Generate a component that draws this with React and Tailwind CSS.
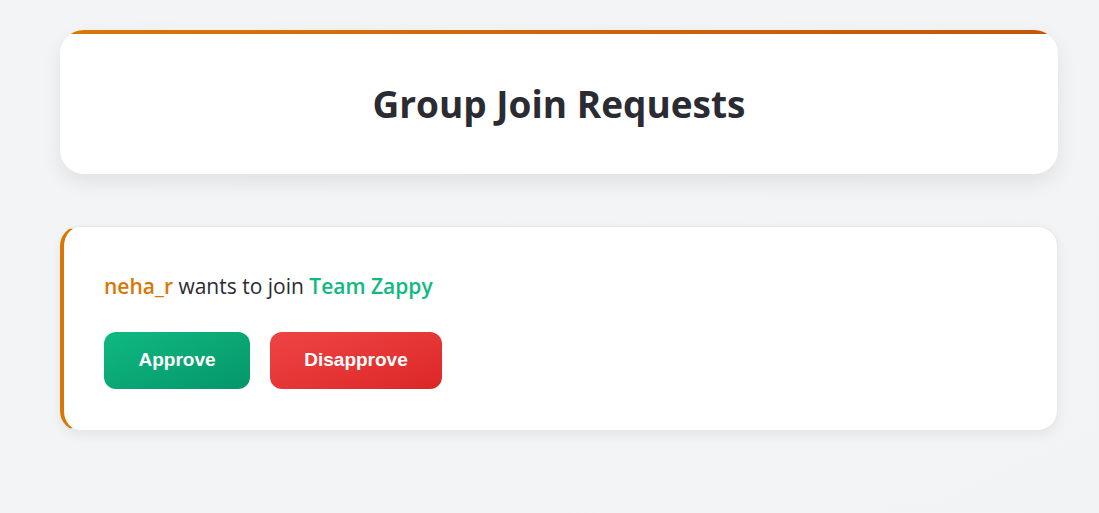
export default function App() {
  return (
    <div className="min-h-[513px] w-full bg-gradient-to-br from-[#f3f4f6] to-[#f1f3f5] pt-[30px] pl-[60px] pr-[41px]" style={{ fontFamily: '"Open Sans", "Noto Sans", sans-serif' }}>
      <div className="relative overflow-hidden rounded-[24px] bg-white shadow-[0_8px_20px_rgba(0,0,0,0.08)] h-[144px] flex items-center justify-center">
        <div className="absolute left-0 right-0 top-0 h-[4px] bg-gradient-to-r from-[#d97706] to-[#c2560c]" />
        <h1 className="text-[37px] font-bold text-[#2b2b33] tracking-[0px] mt-[3px]">Group Join Requests</h1>
      </div>
      <div className="mt-[52px] rounded-[20px] bg-white border border-[#e5e7eb] border-l-[4px] border-l-[#d97706] shadow-[0_4px_12px_rgba(0,0,0,0.06)] px-[40px] pt-[44px] pb-[41px]">
        <p className="text-[21px] leading-[30px] text-[#2b2b33]">
          <span className="font-semibold text-[#d97706]">neha_r</span> wants to join{" "}
          <span className="font-semibold text-[#10b981]">Team Zappy</span>
        </p>
        <div className="mt-[31px] flex gap-[20px]" style={{ fontFamily: '"Liberation Sans", Arial, sans-serif' }}>
          <button className="h-[57px] w-[146px] rounded-[12px] bg-gradient-to-br from-[#10b981] to-[#059669] text-white text-[19px] font-bold">Approve</button>
          <button className="h-[57px] w-[172px] rounded-[12px] bg-gradient-to-br from-[#ef4444] to-[#dc2626] text-white text-[19px] font-bold">Disapprove</button>
        </div>
      </div>
    </div>
  );
}
